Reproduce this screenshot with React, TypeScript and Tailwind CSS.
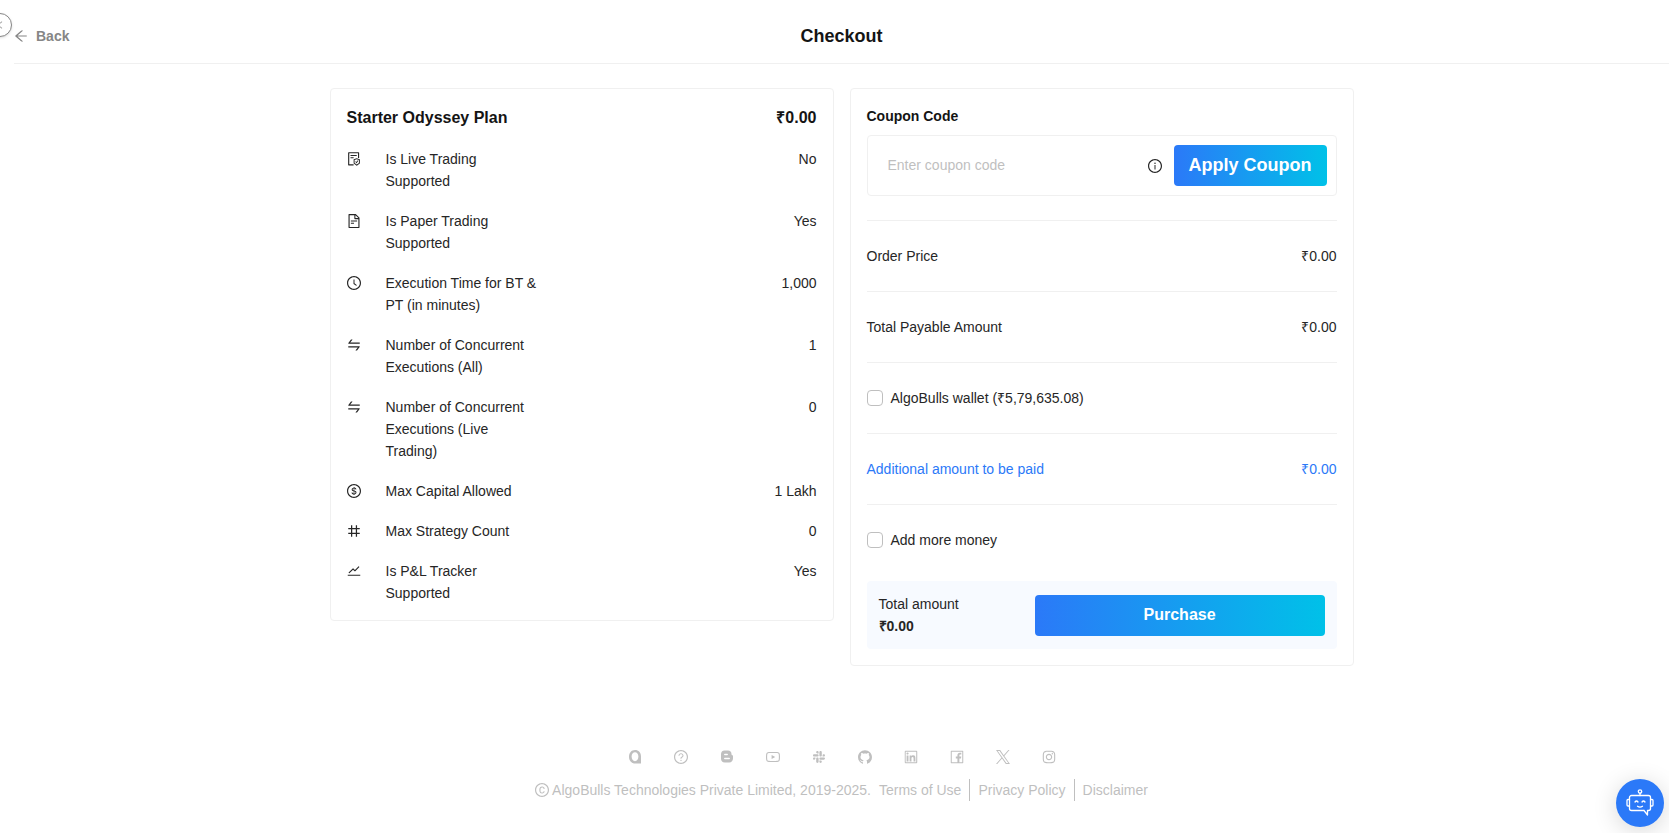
import React, { useState } from 'react';
import type { IconType } from 'react-icons';
import {
  AiFillGithub,
  AiOutlineArrowLeft,
  AiOutlineClockCircle,
  AiOutlineCopyright,
  AiOutlineDollar,
  AiOutlineFacebook,
  AiOutlineFileProtect,
  AiOutlineFileText,
  AiOutlineInfoCircle,
  AiOutlineInstagram,
  AiOutlineLeft,
  AiOutlineLinkedin,
  AiOutlineNumber,
  AiOutlineQuestionCircle,
  AiOutlineSlack,
  AiOutlineStock,
  AiOutlineSwap,
  AiOutlineYoutube,
} from 'react-icons/ai';

interface Feature {
  icon: IconType;
  label: string;
  value: string;
}

// trims the empty margin that the ant icons carry in their 1024 grid
const ICON_BOX = '64 64 896 896';

const features: Feature[] = [
  { icon: AiOutlineFileProtect, label: 'Is Live Trading Supported', value: 'No' },
  { icon: AiOutlineFileText, label: 'Is Paper Trading Supported', value: 'Yes' },
  { icon: AiOutlineClockCircle, label: 'Execution Time for BT & PT (in minutes)', value: '1,000' },
  { icon: AiOutlineSwap, label: 'Number of Concurrent Executions (All)', value: '1' },
  { icon: AiOutlineSwap, label: 'Number of Concurrent Executions (Live Trading)', value: '0' },
  { icon: AiOutlineDollar, label: 'Max Capital Allowed', value: '1 Lakh' },
  { icon: AiOutlineNumber, label: 'Max Strategy Count', value: '0' },
  { icon: AiOutlineStock, label: 'Is P&L Tracker Supported', value: 'Yes' },
];

const AlgoBullsLogo = () => (
  <svg viewBox="0 0 14 14" className="size-3.5" fill="currentColor" fillRule="evenodd">
    <path d="M7 0C10.6 0 13 2.6 13 6.4V13.500H7C3.400 13.500 1 10.700 1 6.800S3.400 0 7 0ZM7 2.200C5 2.200 3.600 4 3.600 6.600S5 11.200 7 11.200S10.400 9.200 10.400 6.600S9 2.200 7 2.200Z" />
  </svg>
);

const BloggerLogo = () => (
  <svg viewBox="0 0 14 14" className="size-3.5" fill="currentColor" fillRule="evenodd">
    <path d="M4.500 .5H8C10.200 .5 11.500 2 11.500 4C11.500 4.900 11.900 5.200 12.400 5.200C12.900 5.200 13 5.500 13 6V8.500C13 10.800 11.500 12.500 9.200 12.500H4.800C2.500 12.500 1 11 1 8.700V4.300C1 2 2.300 .5 4.500 .5ZM4.800 3.700A.75.75 0 0 0 4.800 5.200H7.200A.75.75 0 0 0 7.200 3.700ZM4.800 7.700A.75.75 0 0 0 4.800 9.200H9.200A.75.75 0 0 0 9.200 7.700Z" />
  </svg>
);

const XLogo = () => (
  <svg viewBox="0 0 24 24" className="size-3.5" fill="currentColor">
    <path d="M14.258 10.152 23.176 0h-2.113l-7.747 8.813L7.133 0H0l9.352 13.328L0 23.973h2.113l8.176-9.309 6.531 9.309h7.133zm-2.895 3.293-.949-1.328L2.875 1.560h3.246l6.086 8.523.945 1.328 7.910 11.078h-3.246z" />
  </svg>
);

const socialLinks: { name: string; icon: React.ComponentType<{ viewBox?: string; className?: string }> }[] = [
  { name: 'AlgoBulls', icon: AlgoBullsLogo },
  { name: 'Help', icon: AiOutlineQuestionCircle },
  { name: 'Blogger', icon: BloggerLogo },
  { name: 'YouTube', icon: AiOutlineYoutube },
  { name: 'Slack', icon: AiOutlineSlack },
  { name: 'GitHub', icon: AiFillGithub },
  { name: 'LinkedIn', icon: AiOutlineLinkedin },
  { name: 'Facebook', icon: AiOutlineFacebook },
  { name: 'X', icon: XLogo },
  { name: 'Instagram', icon: AiOutlineInstagram },
];

const Header = () => (
  <header className="mt-2 grid h-14 grid-cols-3 items-center border-b border-[#f0f0f0]">
    <button type="button" className="flex items-center gap-2 justify-self-start font-bold text-[#868686]">
      <AiOutlineArrowLeft viewBox={ICON_BOX} className="size-3.5" />
      Back
    </button>
    <h1 className="text-center text-lg font-bold text-[#141414]">Checkout</h1>
  </header>
);

const PlanCard = () => (
  <section className="flex flex-1 flex-col gap-[18px] rounded border border-[#f0f0f0] p-4">
    <div className="flex justify-between text-base leading-[25px] font-bold text-[#141414]">
      <h2>Starter Odyssey Plan</h2>
      <span>₹0.00</span>
    </div>
    {features.map(({ icon: Icon, label, value }) => (
      <div key={label} className="flex">
        <Icon viewBox={ICON_BOX} className="mt-1 mr-[25px] size-3.5 shrink-0" />
        <span className="w-[154px]">{label}</span>
        <span className="ml-auto">{value}</span>
      </div>
    ))}
  </section>
);

const SummaryRow = ({ label, value }: { label: string; value: string }) => (
  <div className="flex justify-between">
    <span>{label}</span>
    <span>{value}</span>
  </div>
);

interface CheckRowProps {
  label: string;
  checked: boolean;
  onChange: (checked: boolean) => void;
}

const CheckRow = ({ label, checked, onChange }: CheckRowProps) => (
  <label className="flex items-center gap-2">
    <input
      type="checkbox"
      checked={checked}
      onChange={(e) => onChange(e.target.checked)}
      className="size-4 appearance-none rounded border border-[#bfbfbf] bg-white checked:border-[#2b79f8] checked:bg-[#2b79f8]"
    />
    {label}
  </label>
);

const PaymentCard = () => {
  const [coupon, setCoupon] = useState('');
  const [useWallet, setUseWallet] = useState(false);
  const [addMoney, setAddMoney] = useState(false);

  return (
    <section className="flex-1 rounded border border-[#f0f0f0] p-4">
      <label htmlFor="coupon" className="block font-bold text-[#141414]">
        Coupon Code
      </label>
      <div className="mt-2 mb-6 flex items-center rounded border border-[#f0f0f0] p-[9px]">
        <input
          id="coupon"
          value={coupon}
          onChange={(e) => setCoupon(e.target.value)}
          placeholder="Enter coupon code"
          className="h-10 min-w-0 flex-1 self-start px-[11px] outline-none placeholder:text-[#bfbfbf]"
        />
        <AiOutlineInfoCircle viewBox={ICON_BOX} className="mx-3 size-3.5 shrink-0" />
        <button
          type="button"
          className="h-[41px] w-[153px] rounded bg-linear-to-r/srgb from-[#2b79f8] to-[#00c1e8] text-lg leading-[25px] font-bold text-white"
        >
          Apply Coupon
        </button>
      </div>

      <div className="border-t border-[#f0f0f0] py-6">
        <SummaryRow label="Order Price" value="₹0.00" />
      </div>
      <div className="border-t border-[#f0f0f0] py-6">
        <SummaryRow label="Total Payable Amount" value="₹0.00" />
      </div>
      <div className="border-t border-[#f0f0f0] py-6">
        <CheckRow label="AlgoBulls wallet (₹5,79,635.08)" checked={useWallet} onChange={setUseWallet} />
      </div>
      <div className="border-t border-[#f0f0f0] py-6 text-[#2b79f8]">
        <SummaryRow label="Additional amount to be paid" value="₹0.00" />
      </div>
      <div className="border-t border-[#f0f0f0] pt-6">
        <CheckRow label="Add more money" checked={addMoney} onChange={setAddMoney} />
      </div>

      <div className="mt-[30px] flex items-center justify-between rounded bg-[#f7faff] p-3">
        <div>
          <p>Total amount</p>
          <p className="font-bold">₹0.00</p>
        </div>
        <button
          type="button"
          className="h-[41px] w-[65%] rounded bg-linear-to-r/srgb from-[#2b79f8] to-[#00c1e8] text-base font-bold text-white"
        >
          Purchase
        </button>
      </div>
    </section>
  );
};

const Footer = () => (
  <footer className="mt-[84px] flex flex-col items-center gap-[15px] pb-4 text-[#bfbfbf]">
    <nav className="flex gap-8">
      {socialLinks.map(({ name, icon: Icon }) => (
        <a key={name} href="#" aria-label={name} className="flex size-3.5 items-center justify-center">
          <Icon viewBox={ICON_BOX} className="size-3.5" />
        </a>
      ))}
    </nav>
    <div className="flex items-center">
      <AiOutlineCopyright viewBox={ICON_BOX} className="mr-[3px] size-3.5" />
      <span className="mr-2">AlgoBulls Technologies Private Limited, 2019-2025.</span>
      <a href="#">Terms of Use</a>
      <a href="#" className="ml-2 border-l border-current pl-2">
        Privacy Policy
      </a>
      <a href="#" className="ml-2 border-l border-current pl-2">
        Disclaimer
      </a>
    </div>
  </footer>
);

const ChatButton = () => (
  <button
    type="button"
    aria-label="Open chat"
    className="fixed right-[5px] bottom-1.5 flex size-12 items-center justify-center rounded-full bg-[#2b79f8] text-white shadow-[0_4px_24px_rgba(0,0,0,0.16)]"
  >
    <svg
      viewBox="0 0 28 28"
      className="size-7"
      fill="none"
      stroke="currentColor"
      strokeWidth="1.3"
      strokeLinecap="round"
      strokeLinejoin="round"
    >
      <circle cx="14" cy="2.500" r="1.700" />
      <path d="M14 4.200V6.500" />
      <path d="M18 21.500H5.500A2 2 0 0 1 3.500 19.500V8.500A2 2 0 0 1 5.500 6.500H22.500A2 2 0 0 1 24.500 8.500V19.500A2 2 0 0 1 22.500 21.500H21.500V26L18 21.500" />
      <path d="M3.500 10.500H2A1 1 0 0 0 1 11.500V16A1 1 0 0 0 2 17H3.500M24.500 10.500H26A1 1 0 0 1 27 11.500V16A1 1 0 0 1 26 17H24.500" />
      <path d="M9 13Q10.500 11 12 13M16 13Q17.500 11 19 13M11.500 17.300Q14 19 16.500 17.300" />
    </svg>
  </button>
);

export default function App() {
  return (
    <div className="flow-root min-h-screen overflow-x-hidden bg-white pl-3.5 font-['Liberation_Sans',Arial,sans-serif] text-sm leading-[22px] text-[#262626]">
      {/* sidebar toggle, half hidden by the window edge */}
      <button
        type="button"
        aria-label="Expand menu"
        className="absolute top-[13px] -left-3 flex size-6 items-center justify-center rounded-full border border-[#868686] bg-white text-[#999999] shadow-sm"
      >
        <AiOutlineLeft className="size-2.5" />
      </button>

      <Header />
      <main className="mx-auto mt-6 flex max-w-5xl items-start gap-4">
        <PlanCard />
        <PaymentCard />
      </main>
      <Footer />
      <ChatButton />
    </div>
  );
}
